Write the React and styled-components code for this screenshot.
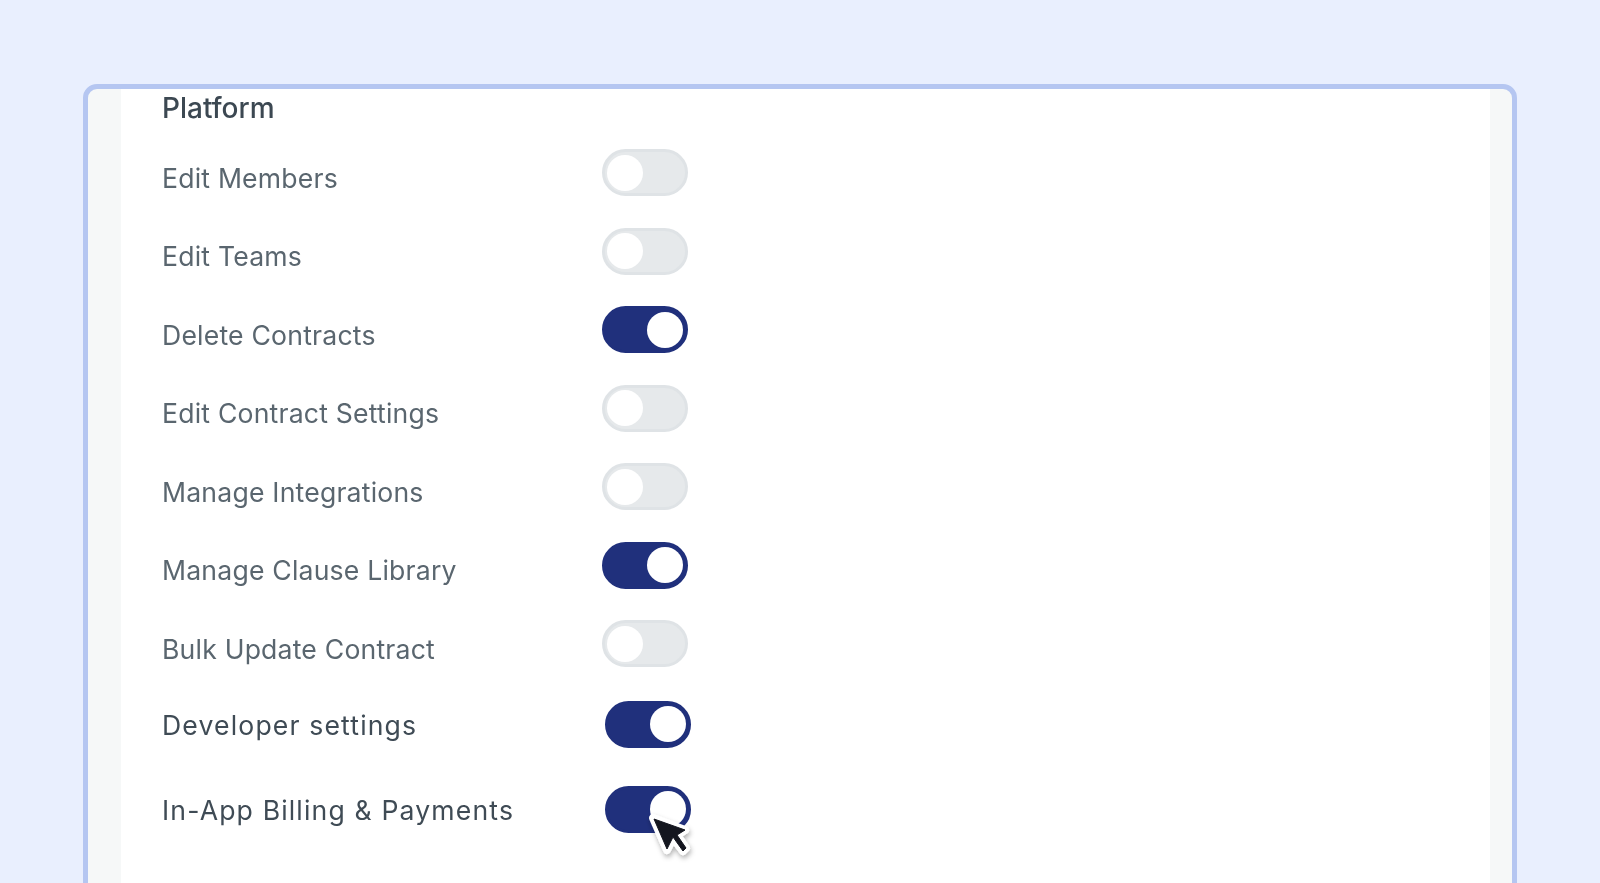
import React from "react";
import styled, { createGlobalStyle } from "styled-components";

const GlobalStyle = createGlobalStyle`
  html, body {
    margin: 0;
    height: 883px;
    overflow: hidden;
    background: #e9effe;
    font-family: "Inter", "Liberation Sans", sans-serif;
  }
`;

const Page = styled.div`
  height: 883px;
  box-sizing: border-box;
  padding: 84px 83px 0 83px;
  overflow: hidden;
`;

const Frame = styled.div`
  display: flex;
  height: 830px;
  box-sizing: border-box;
  border: 5px solid #b5c6f1;
  border-radius: 14px;
  background: #f6f8f8;
  overflow: hidden;
`;

const Panel = styled.section`
  flex: 1;
  margin: 0 22px 0 33px;
  padding: 1px 0 0 41px;
  background: #fff;
  filter: blur(0.55px);
`;

const Heading = styled.h2`
  margin: 0 0 23px;
  height: 36px;
  font-size: 28px;
  line-height: 36px;
  font-weight: 500;
  color: #3c4852;
`;

const Row = styled.div`
  display: flex;
  align-items: flex-start;
  height: ${(p) => p.$height}px;
`;

const Label = styled.span`
  width: ${(p) => (p.$strong ? 443 : 440)}px;
  padding-top: ${(p) => (p.$strong ? 6 : 10.5)}px;
  font-size: 26.6px;
  line-height: 36px;
  letter-spacing: ${(p) => (p.$strong ? 1.15 : 0.2)}px;
  font-weight: 400;
  color: ${(p) => (p.$strong ? "#3f4b55" : "#5a666f")};
  white-space: nowrap;
`;

const Switch = styled.div`
  position: relative;
  width: 86px;
  height: 47px;
  box-sizing: border-box;
  border-radius: 24px;
  border: 3px solid ${(p) => (p.$on ? "#20307c" : "#dfe3e6")};
  background: ${(p) => (p.$on ? "#20307c" : "#e6e9eb")};
  display: flex;
  align-items: center;
  justify-content: ${(p) => (p.$on ? "flex-end" : "flex-start")};
  padding: 0 2px;
`;

const Knob = styled.span`
  width: 36px;
  height: 36px;
  border-radius: 50%;
  background: #fff;
`;

const DeveloperGroup = styled.div`
  margin-top: 2px;
`;

const Pointer = styled.svg`
  position: absolute;
  left: 39px;
  top: 23px;
  width: 50px;
  height: 52px;
  overflow: visible;
`;

const platform = [
  ["Edit Members", false],
  ["Edit Teams", false],
  ["Delete Contracts", true],
  ["Edit Contract Settings", false],
  ["Manage Integrations", false],
  ["Manage Clause Library", true],
  ["Bulk Update Contract", false],
];

const CursorIcon = () => (
  <Pointer viewBox="0 0 50 52">
    <defs>
      <filter id="cursorShadow" x="-30%" y="-30%" width="170%" height="170%">
        <feDropShadow dx="1" dy="3" stdDeviation="2.5" floodColor="#000" floodOpacity="0.3" />
      </filter>
    </defs>
    <path
      d="M6 6 L20 38 L26 26 L36 39 L39 36 L30 23 L38 18 Z"
      fill="#fff"
      stroke="#fff"
      strokeWidth="8"
      strokeLinejoin="round"
      filter="url(#cursorShadow)"
    />
    <path
      d="M7 7 L20 37 L26 25 L36 39 L39 36 L30 23 L38 18 Z"
      fill="#14161f"
      stroke="#14161f"
      strokeWidth="1"
      strokeLinejoin="round"
    />
  </Pointer>
);

export default function App() {
  return (
    <>
      <GlobalStyle />
      <Page>
        <Frame>
          <Panel>
            <Heading>Platform</Heading>
            {platform.map(([name, on]) => (
              <Row key={name} $height={78.5}>
                <Label>{name}</Label>
                <Switch $on={on}>
                  <Knob />
                </Switch>
              </Row>
            ))}
            <DeveloperGroup>
              <Row $height={85}>
                <Label $strong>Developer settings</Label>
                <Switch $on>
                  <Knob />
                </Switch>
              </Row>
              <Row $height={85}>
                <Label $strong>In-App Billing &amp; Payments</Label>
                <Switch $on>
                  <Knob />
                  <CursorIcon />
                </Switch>
              </Row>
            </DeveloperGroup>
          </Panel>
        </Frame>
      </Page>
    </>
  );
}
